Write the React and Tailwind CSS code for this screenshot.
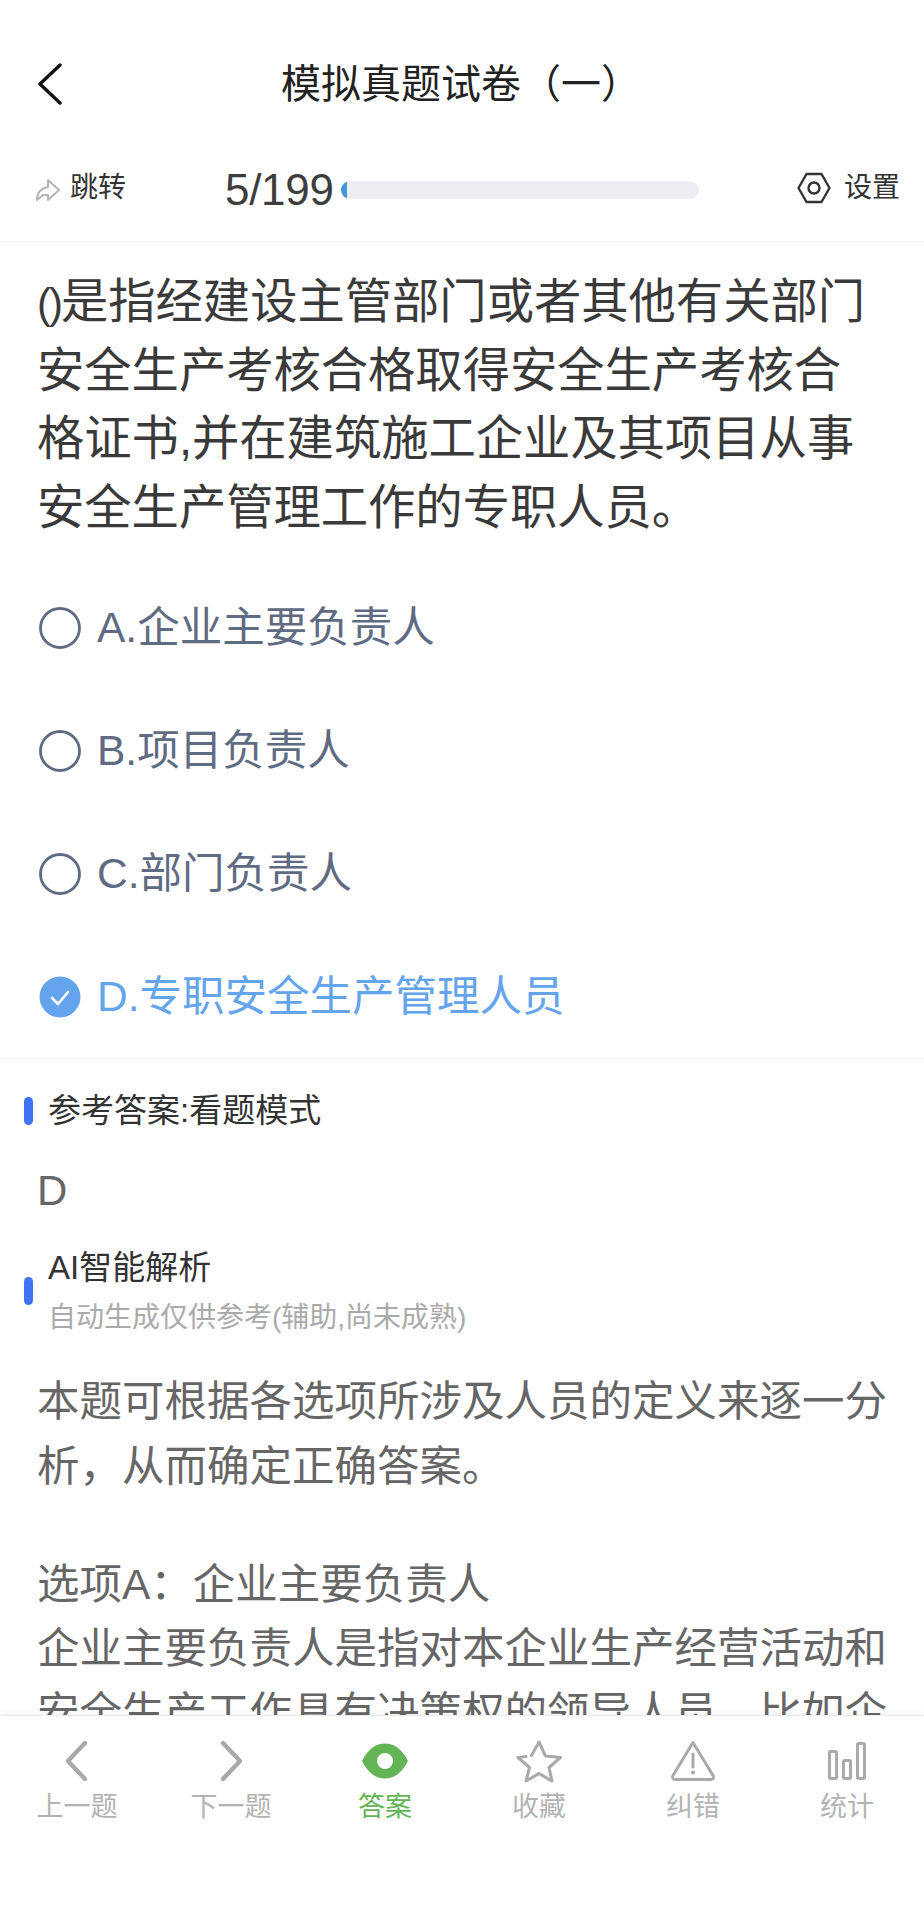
import React from 'react';

const CJK = 'font-["Liberation_Sans","Noto_Sans_CJK_SC",sans-serif]';

const options = [
  { label: 'A.企业主要负责人' },
  { label: 'B.项目负责人' },
  { label: 'C.部门负责人' },
  { label: 'D.专职安全生产管理人员', checked: true },
];

const Radio = ({ checked }) =>
  checked ? (
    <svg width="42" height="42" viewBox="0 0 42 42" className="shrink-0">
      <circle cx="21" cy="21" r="20.5" fill="#64a4ec" />
      <path d="M13 22l6 6 10-12" fill="none" stroke="#fff" strokeWidth="2.6" strokeLinecap="round" strokeLinejoin="round" />
    </svg>
  ) : (
    <svg width="42" height="42" viewBox="0 0 42 42" className="shrink-0">
      <circle cx="21" cy="21" r="19.5" fill="none" stroke="#5f6b83" strokeWidth="2.8" />
    </svg>
  );

const Mark = () => <span className="w-[9px] h-[28px] rounded-full bg-[#3f75f5] shrink-0" />;

const tabs = [
  {
    label: '上一题',
    icon: (
      <svg width="26" height="42" viewBox="0 0 26 42">
        <path d="M21 3L4 21l17 18" fill="none" stroke="#a9a9a9" strokeWidth="4.4" strokeLinecap="round" strokeLinejoin="round" />
      </svg>
    ),
  },
  {
    label: '下一题',
    icon: (
      <svg width="26" height="42" viewBox="0 0 26 42">
        <path d="M5 3l17 18L5 39" fill="none" stroke="#a9a9a9" strokeWidth="4.4" strokeLinecap="round" strokeLinejoin="round" />
      </svg>
    ),
  },
  {
    label: '答案',
    active: true,
    icon: (
      <svg width="48" height="38" viewBox="0 0 48 38">
        <path fillRule="evenodd" d="M1 19C7 7 15 1.500 24 1.500S41 7 47 19c-6 12-14 17.500-23 17.500S7 31 1 19zm23-8a8 8 0 100 16 8 8 0 000-16z" fill="#62b455" />
      </svg>
    ),
  },
  {
    label: '收藏',
    icon: (
      <svg width="46" height="44" viewBox="0 0 46 44">
        <path d="M15.500 16.500L23 3l6.500 14 15 1.500-11.500 10L36 42l-13-7.500L10 42l3.500-13.500L2 18.500l8-1" fill="none" stroke="#a9a9a9" strokeWidth="3" strokeLinecap="round" strokeLinejoin="round" />
      </svg>
    ),
  },
  {
    label: '纠错',
    icon: (
      <svg width="46" height="42" viewBox="0 0 46 42">
        <path d="M23 2.500L3 35.500q-1.500 4 2.500 4h35q4 0 2.500-4z" fill="none" stroke="#a9a9a9" strokeWidth="3" strokeLinejoin="round" />
        <path d="M23 14v13" stroke="#a9a9a9" strokeWidth="3" strokeLinecap="round" />
        <circle cx="23" cy="32.500" r="2" fill="#a9a9a9" />
      </svg>
    ),
  },
  {
    label: '统计',
    icon: (
      <svg width="38" height="38" viewBox="0 0 38 38">
        <rect x="1.500" y="9.500" width="7" height="27" rx="1" fill="none" stroke="#ababab" strokeWidth="3" />
        <rect x="15.500" y="18.500" width="7" height="18" rx="1" fill="none" stroke="#ababab" strokeWidth="3" />
        <rect x="29.500" y="1.500" width="7" height="35" rx="1" fill="none" stroke="#ababab" strokeWidth="3" />
      </svg>
    ),
  },
];

export default function App() {
  return (
    <div className={`${CJK} w-[924px] h-[1920px] bg-white flex flex-col overflow-hidden`}>
      {/* 标题栏 */}
      <div className="h-[150px] shrink-0 pt-[18px] pl-[37px] pr-[37px] flex items-center">
        <svg width="26" height="42" viewBox="0 0 26 42" className="shrink-0">
          <path d="M23 2L3 21l20 19" fill="none" stroke="#111" strokeWidth="3.4" strokeLinecap="round" strokeLinejoin="round" />
        </svg>
        <h1 className="flex-1 text-center text-[40px] leading-[50px] text-[#222] pr-[28px]">模拟真题试卷（一）</h1>
      </div>

      {/* 进度 */}
      <div className="h-[92px] shrink-0 border-b border-[#f1f1f1] pl-[35px] pr-[24px] flex items-center pb-[12px]">
        <svg width="26" height="24" viewBox="0 0 26 24" className="shrink-0">
          <path d="M13 2l11 10-11 10v-5H8l-6 5q0-11 11-13z" fill="none" stroke="#b5b5b5" strokeWidth="2" strokeLinejoin="round" />
        </svg>
        <span className="ml-[9px] text-[28px] leading-[36px] text-[#333] w-[155px] shrink-0 -mt-[4px]">跳转</span>
        <span className="text-[44px] leading-[50px] text-[#3d3d3d] w-[116px] shrink-0 tracking-[-0.3px]">5/199</span>
        <div className="w-[358px] h-[18px] rounded-full bg-[#eceef3] overflow-hidden shrink-0">
          <div className="w-[6px] h-full bg-[#3f97d8]" />
        </div>
        <svg width="34" height="32" viewBox="0 0 34 32" className="ml-auto shrink-0 -mt-[4px]">
          <path d="M9.500 2h15l8 14-8 14h-15l-8-14z" fill="none" stroke="#333" strokeWidth="2.4" strokeLinejoin="round" />
          <circle cx="17" cy="16" r="5.500" fill="none" stroke="#333" strokeWidth="2.4" />
        </svg>
        <span className="ml-[13px] text-[28px] leading-[36px] text-[#333] -mt-[4px]">设置</span>
      </div>

      {/* 正文 */}
      <div className="flex-1 min-h-0 overflow-hidden">
        <p className="pl-[37px] pr-[47px] pt-[26px] text-[47.300px] leading-[68.500px] text-[#3a3a3a]">
          <span className="text-[42px] leading-none tracking-[-2px]">()</span>是指经建设主管部门或者其他有关部门安全生产考核合格取得安全生产考核合格证书,并在建筑施工企业及其项目从事安全生产管理工作的专职人员。
        </p>

        <div className="mt-[24px] border-b border-[#f4f4f4]">
          {options.map((o) => (
            <div key={o.label} className="h-[123px] pl-[39px] flex items-center gap-[16px]">
              <Radio checked={o.checked} />
              <span className={`text-[42.500px] leading-[50px] ${o.checked ? 'text-[#64a4ec]' : 'text-[#5f6b83]'}`}>{o.label}</span>
            </div>
          ))}
        </div>

        <div className="pl-[24px] pt-[29px] flex items-center gap-[15px]">
          <Mark />
          <span className="text-[33px] leading-[46px] text-[#333]">参考答案:看题模式</span>
        </div>
        <div className="pl-[37px] mt-[32px] text-[42px] leading-[50px] text-[#666]">D</div>
        <div className="pl-[24px] mt-[29px] flex items-center gap-[15px]">
          <Mark />
          <div>
            <div className="text-[33px] leading-[46px] text-[#333]">AI智能解析</div>
            <div className="text-[28px] leading-[38px] text-[#aaa] mt-[8px]">自动生成仅供参考(辅助,尚未成熟)</div>
          </div>
        </div>
        <p className="px-[37px] mt-[32px] text-[42.500px] leading-[65px] text-[#666]">
          本题可根据各选项所涉及人员的定义来逐一分析，从而确定正确答案。
        </p>
        <p className="px-[37px] mt-[54px] text-[42.500px] leading-[64px] text-[#666]">
          选项A：企业主要负责人
          <br />
          企业主要负责人是指对本企业生产经营活动和安全生产工作具有决策权的领导人员，比如企
        </p>
      </div>

      {/* 底部工具栏 */}
      <div className="h-[205px] shrink-0 bg-white border-t border-[#ececec] shadow-[0_-2px_6px_rgba(0,0,0,0.05)] grid grid-cols-6 items-start pt-[22px]">
        {tabs.map((t) => (
          <div key={t.label} className="flex flex-col items-center">
            <div className="h-[46px] flex items-center justify-center">{t.icon}</div>
            <span className={`mt-[5px] text-[27px] leading-[36px] ${t.active ? 'text-[#62b455]' : 'text-[#b3b3b3]'}`}>{t.label}</span>
          </div>
        ))}
      </div>
    </div>
  );
}
